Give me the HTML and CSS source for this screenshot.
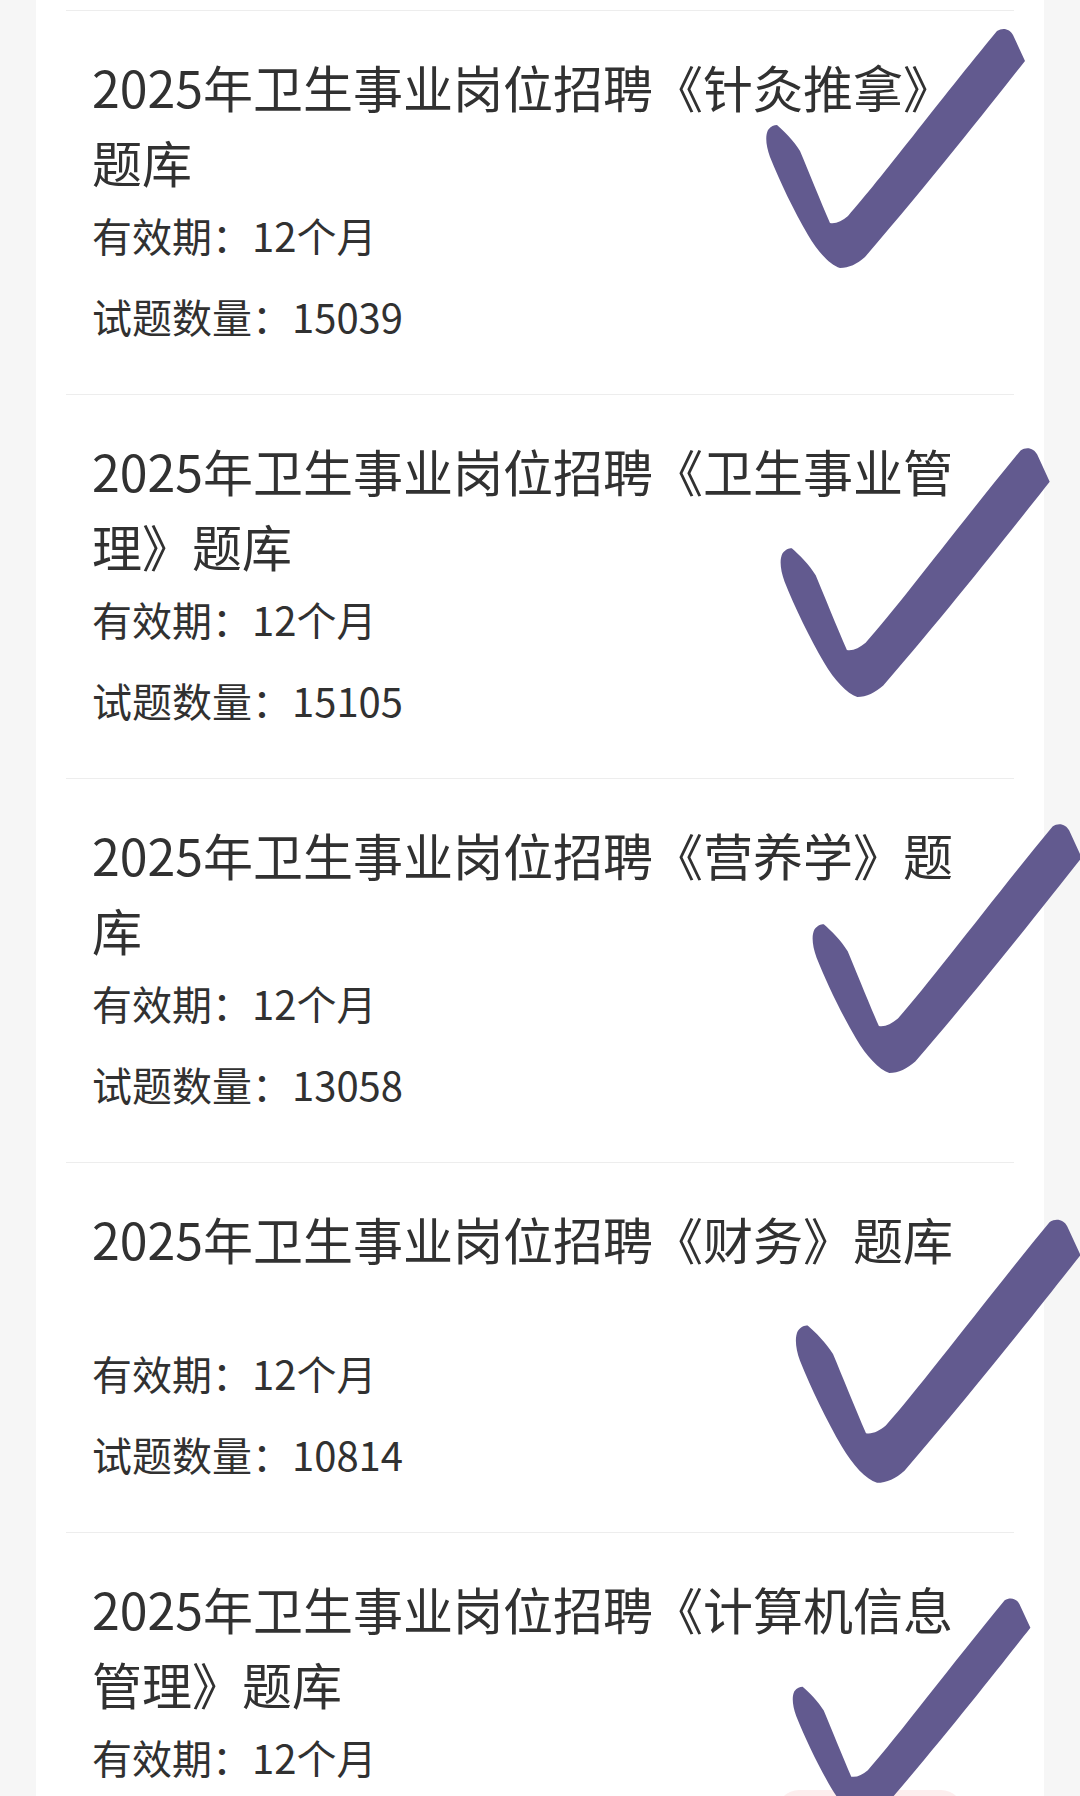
FILE: index.html
```html
<!DOCTYPE html>
<html lang="zh-CN">
<head>
    <meta charset="UTF-8">
    <meta name="viewport" content="width=device-width, initial-scale=1.0">
    <title>题库列表</title>
    <link rel="stylesheet" href="styles.css">
</head>
<body>

<svg class="defs" width="0" height="0" aria-hidden="true">
    <defs>
        <path id="tick" d="M17 105 C24 111 34 121 40 131 C48 150 60 180 70 203 C76 204 82 201 88 196 C120 160 180 80 237 11 C243 7 250 9 253 15 L265 41 C234 80 175 156 105 237 C97 244 89 248 80 248 C70 245 58 232 48 215 C34 191 20 162 10 137 C6 126 5 116 8 110 C11 106 14 105 17 105 Z"/>
    </defs>
</svg>

<div class="list">
    <!-- 题库 1 -->
    <div class="item">
        <h2 class="title">2025年卫生事业岗位招聘《针灸推拿》题库</h2>
        <p class="meta">有效期：12个月</p>
        <p class="meta">试题数量：15039</p>
        <svg class="tick tick-1" viewBox="0 0 270 250"><use href="#tick"/></svg>
    </div>

    <!-- 题库 2 -->
    <div class="item">
        <h2 class="title">2025年卫生事业岗位招聘《卫生事业管理》题库</h2>
        <p class="meta">有效期：12个月</p>
        <p class="meta">试题数量：15105</p>
        <svg class="tick tick-2" viewBox="0 0 270 250"><use href="#tick"/></svg>
    </div>

    <!-- 题库 3 -->
    <div class="item">
        <h2 class="title">2025年卫生事业岗位招聘《营养学》题库</h2>
        <p class="meta">有效期：12个月</p>
        <p class="meta">试题数量：13058</p>
        <svg class="tick tick-3" viewBox="0 0 270 250"><use href="#tick"/></svg>
    </div>

    <!-- 题库 4 -->
    <div class="item">
        <h2 class="title">2025年卫生事业岗位招聘《财务》题库</h2>
        <p class="meta">有效期：12个月</p>
        <p class="meta">试题数量：10814</p>
        <svg class="tick tick-4" viewBox="0 0 270 250"><use href="#tick"/></svg>
    </div>

    <!-- 题库 5（画面底部只露出一部分） -->
    <div class="item item-last">
        <h2 class="title">2025年卫生事业岗位招聘《计算机信息管理》题库</h2>
        <p class="meta">有效期：12个月</p>
        <div class="buy"></div>
        <svg class="tick tick-5" viewBox="0 0 270 250"><use href="#tick"/></svg>
    </div>
</div>

</body>
</html>
```

FILE: styles.css
```css
html, body {
    height: 1796px;
}
body {
    margin: 0;
    font-family: "Noto Sans CJK SC", "Noto Sans", sans-serif;
    background-color: #f6f6f6;
    color: #313131;
    overflow: hidden;
}
.defs {
    position: absolute;
}
.list {
    margin: 0 36px;
    padding: 10px 30px 0;
    background-color: #fff;
    min-height: 1786px;
}
.item {
    position: relative;
    border-top: 1px solid #ededed;
    padding: 38px 26px 50px;
}
.item-last {
    padding-bottom: 0;
}
.title {
    margin: 0;
    font-size: 50px;
    font-weight: normal;
    line-height: 75px;
    min-height: 136px;
}
.meta {
    margin: 8px 0 0;
    font-size: 40px;
    line-height: 56px;
}
.meta + .meta {
    margin-top: 25px;
}
.buy {
    position: absolute;
    left: 711px;
    top: 257px;
    width: 186px;
    height: 44px;
    border-radius: 22px;
    background-color: #fdeeee;
}
.tick {
    position: absolute;
    z-index: 2;
    fill: #625a8f;
    overflow: visible;
}
.tick-1 {
    left: 694px;
    top: 9px;
    width: 270px;
    height: 250px;
}
.tick-2 {
    left: 708px;
    top: 44px;
    width: 281px;
    height: 260px;
}
.tick-3 {
    left: 740px;
    top: 36px;
    width: 281px;
    height: 260px;
}
.tick-4 {
    left: 723px;
    top: 47px;
    width: 297px;
    height: 275px;
}
.tick-5 {
    left: 721px;
    top: 57px;
    width: 248px;
    height: 230px;
}
```
